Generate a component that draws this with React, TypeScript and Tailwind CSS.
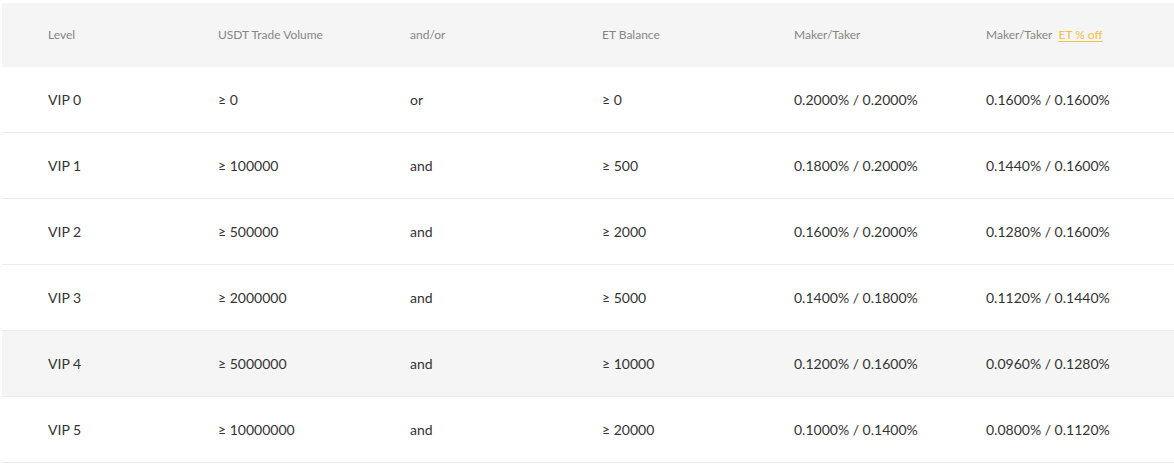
import React from "react";

const rows = [
  ["VIP 0", "≥ 0", "or", "≥ 0", "0.2000% / 0.2000%", "0.1600% / 0.1600%"],
  ["VIP 1", "≥ 100000", "and", "≥ 500", "0.1800% / 0.2000%", "0.1440% / 0.1600%"],
  ["VIP 2", "≥ 500000", "and", "≥ 2000", "0.1600% / 0.2000%", "0.1280% / 0.1600%"],
  ["VIP 3", "≥ 2000000", "and", "≥ 5000", "0.1400% / 0.1800%", "0.1120% / 0.1440%"],
  ["VIP 4", "≥ 5000000", "and", "≥ 10000", "0.1200% / 0.1600%", "0.0960% / 0.1280%"],
  ["VIP 5", "≥ 10000000", "and", "≥ 20000", "0.1000% / 0.1400%", "0.0800% / 0.1120%"],
];

const grid = "grid grid-cols-[170px_192px_192px_192px_192px_1fr] items-center pl-[46px]";

export default function App() {
  return (
    <div
      className="w-[1174px] h-[466px] bg-white pt-[3px] pl-[2px] overflow-hidden"
      style={{ fontFamily: "Lato, 'Open Sans', sans-serif" }}
    >
      <div className={`${grid} h-[64px] bg-[#f5f5f5] text-[12px] text-[#858585]`}>
        <div>Level</div>
        <div>USDT Trade Volume</div>
        <div>and/or</div>
        <div>ET Balance</div>
        <div>Maker/Taker</div>
        <div className="flex items-center gap-[6px]">
          <span>Maker/Taker</span>
          <span className="text-[#f0c04a] underline underline-offset-2">ET % off</span>
        </div>
      </div>
      {rows.map((r, i) => (
        <div
          key={i}
          className={`${grid} h-[66px] border-b border-[#ececec] text-[14px] text-[#333333] ${
            i === 4 ? "bg-[#f5f5f5]" : "bg-white"
          }`}
        >
          {r.map((c, j) => (
            <div key={j}>{c}</div>
          ))}
        </div>
      ))}
    </div>
  );
}
